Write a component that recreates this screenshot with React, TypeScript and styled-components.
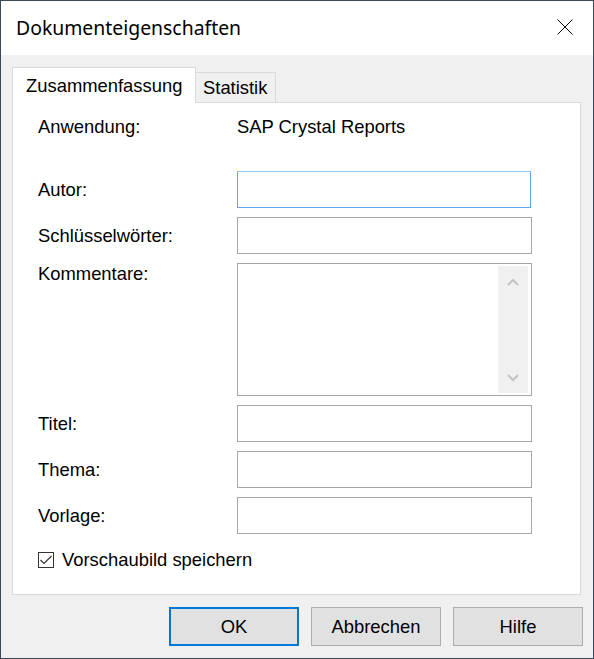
import React from "react";
import styled, { createGlobalStyle } from "styled-components";

const GlobalStyle = createGlobalStyle`
  html, body { margin: 0; padding: 0; background: #f0f0f0; }
  body { overflow: hidden; }
  * { box-sizing: border-box; }
`;

const Window = styled.div`
  width: 594px;
  height: 659px;
  border: 1px solid #3b4859;
  display: flex;
  flex-direction: column;
  background: #f0f0f0;
  font-family: "Liberation Sans", Arial, sans-serif;
  font-size: 18.4px;
  color: #000;
`;

const TitleBar = styled.div`
  height: 54px;
  flex: none;
  background: #fff;
  display: flex;
  align-items: center;
  justify-content: space-between;
  padding: 0 20px 0 15px;
`;

const Title = styled.h1`
  margin: 0;
  font-family: "Noto Sans", "Segoe UI", sans-serif;
  font-weight: 400;
  font-size: 19.4px;
  line-height: 24px;
`;

const CloseButton = styled.button`
  border: 0;
  background: none;
  padding: 0;
  width: 16px;
  height: 16px;
  display: flex;
  margin-top: -2px;
`;

const Body = styled.div`
  flex: 1;
  display: flex;
  flex-direction: column;
  padding: 12px 12px 12px 11px;
  min-height: 0;
`;

const TabList = styled.div`
  height: 35px;
  flex: none;
  display: flex;
  align-items: flex-end;
  position: relative;
  z-index: 1;
`;

const Tab = styled.div<{ $active?: boolean }>`
  background: ${(p) => (p.$active ? "#fff" : "#f0f0f0")};
  border: 1px solid #d9d9d9;
  border-bottom: none;
  line-height: 22px;
  white-space: nowrap;
  ${(p) =>
    p.$active
      ? `width: 184px; height: 36px; margin-bottom: -1px; padding: 7px 0 0 13px;`
      : `width: 80px; height: 30px; border-left: none; padding: 4px 0 0 7px;`}
`;

const Panel = styled.div`
  flex: 1;
  background: #fff;
  border: 1px solid #d9d9d9;
  padding: 13px 47px 0 25px;
  display: flex;
  flex-direction: column;
`;

const InfoRow = styled.div`
  display: flex;
  line-height: 22px;
`;

const Label = styled.label`
  width: 199px;
  flex: none;
  line-height: 22px;
`;

const Form = styled.div`
  display: flex;
  flex-direction: column;
  gap: 9px;
  margin-top: 33px;
`;

const FieldRow = styled.div<{ $top?: boolean }>`
  display: flex;
  align-items: ${(p) => (p.$top ? "flex-start" : "center")};
`;

const TextBox = styled.input<{ $focused?: boolean }>`
  width: ${(p) => (p.$focused ? "294px" : "295px")};
  height: 37px;
  margin: 0;
  padding: 0 4px;
  background: #fff;
  border: 1px solid ${(p) => (p.$focused ? "#5ea6e8" : "#a6a6a6")};
  ${(p) => (p.$focused ? "border-top-color: #99c9ef;" : "")}
  font: inherit;
  outline: none;
`;

const MemoBox = styled.div`
  width: 295px;
  height: 133px;
  border: 1px solid #a6a6a6;
  background: #fff;
  display: flex;
  padding: 2px 3px 2px 0;
`;

const MemoInput = styled.textarea`
  flex: 1;
  border: 0;
  resize: none;
  outline: none;
  font: inherit;
  background: transparent;
`;

const ScrollTrack = styled.div`
  width: 30px;
  flex: none;
  background: #f0f0f0;
  display: flex;
  flex-direction: column;
  justify-content: space-between;
`;

const ScrollArrow = styled.div`
  height: 31px;
  display: flex;
  align-items: center;
  justify-content: center;
`;

const CheckRow = styled.label`
  display: flex;
  align-items: center;
  gap: 8px;
  margin-top: 15px;
  line-height: 22px;
`;

const CheckBox = styled.span`
  width: 16px;
  height: 16px;
  border: 1px solid #333;
  background: #fff;
  display: flex;
  align-items: center;
  justify-content: center;
`;

const ButtonRow = styled.div`
  flex: none;
  display: flex;
  justify-content: flex-end;
  gap: 12px;
  margin: 12px -2px 0 0;
`;

const Button = styled.button<{ $default?: boolean }>`
  width: 130px;
  height: 39px;
  margin: 0;
  padding: 0;
  font: inherit;
  color: #000;
  background: #e1e1e1;
  border: 1px solid ${(p) => (p.$default ? "#0078d7" : "#adadad")};
  ${(p) => (p.$default ? "box-shadow: inset 0 0 0 1px #0078d7;" : "")}
`;

const Chevron = ({ up }: { up?: boolean }) => (
  <svg width="12" height="8" viewBox="0 0 12 8">
    <polyline
      points={up ? "1,7 6,2 11,7" : "1,1 6,6 11,1"}
      fill="none"
      stroke="#c2c2c2"
      strokeWidth="2"
    />
  </svg>
);

export default function App() {
  return (
    <>
      <GlobalStyle />
      <Window>
        <TitleBar>
          <Title>Dokumenteigenschaften</Title>
          <CloseButton aria-label="Schließen">
            <svg width="16" height="16" viewBox="0 0 16 16">
              <path d="M0.5 0.5 L15.5 15.5 M15.5 0.5 L0.5 15.5" stroke="#000" strokeWidth="1" fill="none" />
            </svg>
          </CloseButton>
        </TitleBar>
        <Body>
          <TabList>
            <Tab $active>Zusammenfassung</Tab>
            <Tab>Statistik</Tab>
          </TabList>
          <Panel>
            <InfoRow>
              <Label>Anwendung:</Label>
              <span>SAP Crystal Reports</span>
            </InfoRow>
            <Form>
              <FieldRow>
                <Label>Autor:</Label>
                <TextBox $focused />
              </FieldRow>
              <FieldRow>
                <Label>Schlüsselwörter:</Label>
                <TextBox />
              </FieldRow>
              <FieldRow $top>
                <Label>Kommentare:</Label>
                <MemoBox>
                  <MemoInput />
                  <ScrollTrack>
                    <ScrollArrow>
                      <Chevron up />
                    </ScrollArrow>
                    <ScrollArrow>
                      <Chevron />
                    </ScrollArrow>
                  </ScrollTrack>
                </MemoBox>
              </FieldRow>
              <FieldRow>
                <Label>Titel:</Label>
                <TextBox />
              </FieldRow>
              <FieldRow>
                <Label>Thema:</Label>
                <TextBox />
              </FieldRow>
              <FieldRow>
                <Label>Vorlage:</Label>
                <TextBox />
              </FieldRow>
            </Form>
            <CheckRow>
              <CheckBox>
                <svg width="12" height="10" viewBox="0 0 12 10">
                  <polyline points="0.5,5 4,8.5 11.5,1" fill="none" stroke="#333" strokeWidth="1.2" />
                </svg>
              </CheckBox>
              Vorschaubild speichern
            </CheckRow>
          </Panel>
          <ButtonRow>
            <Button $default>OK</Button>
            <Button>Abbrechen</Button>
            <Button>Hilfe</Button>
          </ButtonRow>
        </Body>
      </Window>
    </>
  );
}
